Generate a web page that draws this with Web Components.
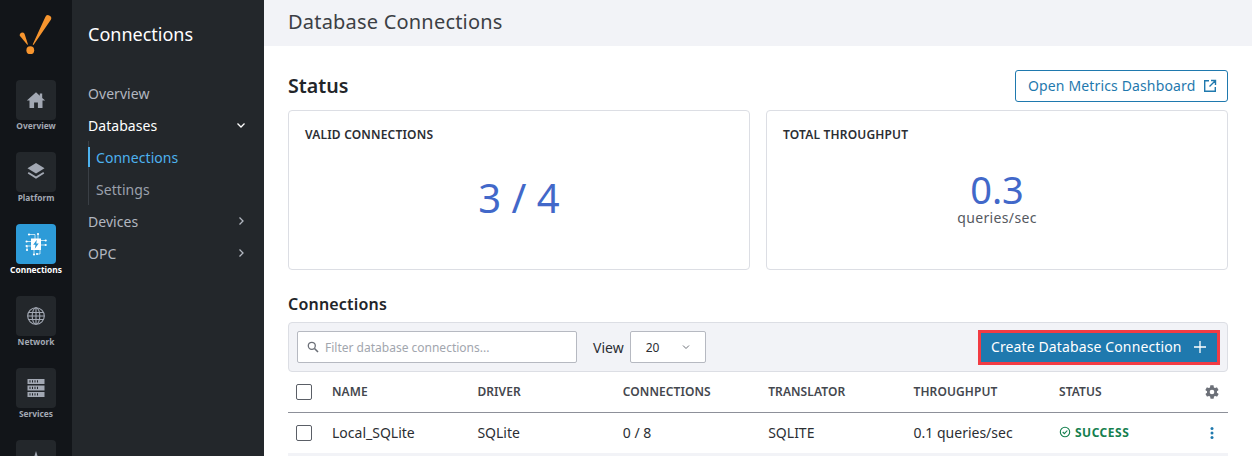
<!DOCTYPE html>
<html lang="en">
<head>
<meta charset="utf-8">
<title>Database Connections</title>
<style>
  html, body { margin: 0; height: 456px; overflow: hidden; background: #fff; }
  body { font-family: "Noto Sans", sans-serif; display: flex; }
</style>
</head>
<body>
<icon-rail>
  <rail-item label="Overview" icon="home"></rail-item>
  <rail-item label="Platform" icon="layers"></rail-item>
  <rail-item label="Connections" icon="chip" active></rail-item>
  <rail-item label="Network" icon="globe"></rail-item>
  <rail-item label="Services" icon="server"></rail-item>
  <rail-item icon="up"></rail-item>
</icon-rail>
<side-nav></side-nav>
<main-view></main-view>

<script>
const ICONS = {
  home: '<path fill="currentColor" d="M10 2.200 0.800 10.600h2.700V18h4.600v-5.400h3.800V18h4.600v-7.400h2.700l-3-2.700V3.400h-2.400v2.300z"/>',
  layers: '<path fill="currentColor" d="M10 1 1.500 6.300 10 11.600l8.500-5.300z"/><path fill="none" stroke="currentColor" stroke-width="1.800" d="M2.200 10.800 10 15.600l7.800-4.800"/>',
  chip: `<g stroke="#fff" stroke-width=".7" fill="none"><path d="M5 2.500h6V7M14 2v5M17 8.500h4.700M17 13h4.700M16 18v4H13M10 18v4.500M7 9.500H2.600M7 14H3v4"/></g><g fill="#fff"><circle cx="5" cy="2.500" r="1.100"/><circle cx="14" cy="2" r="1.100"/><circle cx="21.700" cy="8.500" r="1.100"/><circle cx="21.700" cy="13" r="1.100"/><circle cx="13" cy="22" r="1.100"/><circle cx="10" cy="22.500" r="1.100"/><circle cx="2.600" cy="9.500" r="1.100"/><circle cx="2.600" cy="14" r="1.100"/><circle cx="3" cy="18" r="1.100"/></g><rect x="7" y="6.500" width="10" height="11.500" fill="#fff"/><path fill="#2d9bd8" d="M12.800 7.800 9.200 12.800h2.300l-.7 3.900 3.900-5.300h-2.400z"/>`,
  globe: '<g fill="none" stroke="currentColor" stroke-width="1.100"><circle cx="10" cy="10" r="8.300"/><ellipse cx="10" cy="10" rx="3.800" ry="8.300"/><path d="M10 1.700v16.600M2.500 6.500h15M1.700 10h16.600M2.500 13.500h15"/></g>',
  server: '<g fill="currentColor"><path fill-rule="evenodd" d="M1.500 1h17v4.900h-17zM3.500 2.300v2.300h1V2.300zM6 2.300v2.300h1V2.300zM8.500 2.300v2.300h1V2.300zM11 2.300v2.300h1V2.300z"/><path fill-rule="evenodd" d="M1.500 7.500h17v4.900h-17zM3.500 8.800v2.300h1V8.800zM6 8.800v2.300h1V8.800zM8.500 8.800v2.300h1V8.800zM11 8.800v2.300h1V8.800z"/><path fill-rule="evenodd" d="M1.500 14h17v4.900h-17zM3.500 15.300v2.300h1v-2.300zM6 15.300v2.300h1v-2.300zM8.500 15.300v2.300h1v-2.300zM11 15.300v2.300h1v-2.300z"/></g>',
  up: '<path fill="currentColor" d="M10 1 7.500 9 2 13v2l6-2v3l-2 1.500V19l4-1 4 1v-1.500L12 16v-3l6 2v-2l-5.500-4z"/>'
};

class IconRail extends HTMLElement {
  constructor() {
    super();
    this.attachShadow({ mode: 'open' }).innerHTML = `
    <style>
      :host { display: flex; flex-direction: column; align-items: center; flex: none; width: 72px; height: 456px; overflow: hidden; background: #121519; }
      .logo { flex: none; height: 80px; width: 72px; }
      .logo svg { display: block; }
      .items { display: flex; flex-direction: column; gap: 32px; }
      ::slotted(*) { flex: none; }
    </style>
    <div class="logo">
      <svg width="72" height="70" viewBox="0 0 72 70">
        <path fill="#f7952e" d="M45.200 17.200a3.100 3.100 0 0 1 5.800 2.200L33.500 45l-.8-.4z"/>
        <path fill="#f7952e" d="M19.800 35.800a2.600 2.600 0 0 1 4.700-2.100L28 44.500l-.7.300z"/>
        <circle cx="30.300" cy="50.200" r="3.900" fill="#f7952e"/>
      </svg>
    </div>
    <div class="items"><slot></slot></div>`;
  }
}

class RailItem extends HTMLElement {
  constructor() {
    super();
    const icon = this.getAttribute('icon');
    const label = this.getAttribute('label');
    const size = icon === 'chip' ? 24 : 20;
    this.attachShadow({ mode: 'open' }).innerHTML = `
    <style>
      :host { display: block; width: 40px; height: 40px; position: relative; color: #a2a8b3; }
      :host([active]) { color: #fff; }
      .tile { width: 40px; height: 40px; border-radius: 4px; background: #23272b; display: flex; align-items: center; justify-content: center; }
      :host([active]) .tile { background: #2d9bd8; }
      .label { position: absolute; top: 39px; left: -16px; width: 72px; text-align: center; font: 700 8.4px/13px "Noto Sans", sans-serif; white-space: nowrap; }
      svg { display: block; }
    </style>
    <div class="tile"><svg width="${size}" height="${size}" viewBox="0 0 ${size} ${size}">${ICONS[icon]}</svg></div>
    ${label ? `<div class="label">${label}</div>` : ''}`;
  }
}

class NavLink extends HTMLElement {
  constructor() {
    super();
    const chevron = this.getAttribute('chevron');
    const d = chevron === 'down' ? 'M1.500 3.500 5 7l3.500-3.500' : 'M3.500 1.500 7 5l-3.500 3.500';
    this.attachShadow({ mode: 'open' }).innerHTML = `
    <style>
      :host { display: flex; align-items: center; justify-content: space-between; height: 32px; color: #b2b7c0; font-size: 14px; letter-spacing: .05px; }
      :host([open]) { color: #fff; }
      :host([sub]) { padding-left: 7px; color: #9ba1ab; position: relative; }
      :host([current]) { color: #4db2ef; }
      :host([current])::before { content: ""; position: absolute; left: -1px; top: 6px; bottom: 6px; width: 2px; background: #4db2ef; }
      svg { margin-right: 18px; display: block; }
    </style>
    <span><slot></slot></span>
    ${chevron ? `<svg width="10" height="10" viewBox="0 0 10 10"><path fill="none" stroke="${chevron === 'down' ? '#fff' : '#b2b7c0'}" stroke-width="1.300" d="${d}"/></svg>` : ''}`;
  }
}

class SideNav extends HTMLElement {
  constructor() {
    super();
    this.attachShadow({ mode: 'open' }).innerHTML = `
    <style>
      :host { display: block; flex: none; width: 176px; height: 456px; padding-left: 16px; background: #23272b; font-family: "Noto Sans", sans-serif; }
      h2 { margin: 0; height: 77px; padding-top: 20px; box-sizing: border-box; font-size: 18px; line-height: 28px; font-weight: 400; color: #fff; }
      .sub { border-left: 1px solid #3a3f45; }
    </style>
    <h2>Connections</h2>
    <nav-link>Overview</nav-link>
    <nav-link open chevron="down">Databases</nav-link>
    <div class="sub">
      <nav-link sub current>Connections</nav-link>
      <nav-link sub>Settings</nav-link>
    </div>
    <nav-link chevron="right">Devices</nav-link>
    <nav-link chevron="right">OPC</nav-link>`;
  }
}

class StatCard extends HTMLElement {
  constructor() {
    super();
    const unit = this.getAttribute('unit');
    this.attachShadow({ mode: 'open' }).innerHTML = `
    <style>
      :host { display: flex; flex-direction: column; flex: 1; height: 160px; box-sizing: border-box; padding: 16px; border: 1px solid #dcdee4; border-radius: 4px; background: #fff; }
      .title { font-size: 12px; line-height: 16px; font-weight: 600; letter-spacing: .18px; color: #2b2e33; }
      .body { flex: 1; display: flex; flex-direction: column; align-items: center; justify-content: center; }
      .value { font-size: ${unit ? '38px' : '40px'}; line-height: ${unit ? '40px' : '48px'}; color: #4268c9; }
      .unit { font-size: 14px; line-height: 18px; letter-spacing: .35px; color: #55595f; }
    </style>
    <div class="title">${this.getAttribute('title')}</div>
    <div class="body">
      <div class="value">${this.getAttribute('value')}</div>
      ${unit ? `<div class="unit">${unit}</div>` : ''}
    </div>`;
  }
}

class CheckBox extends HTMLElement {
  constructor() {
    super();
    this.attachShadow({ mode: 'open' }).innerHTML = `
    <style>
      :host { display: block; width: 16px; height: 16px; box-sizing: border-box; border: 1px solid #5a5e66; border-radius: 2px; background: #fff; }
    </style>`;
  }
}

class ConnectionsToolbar extends HTMLElement {
  constructor() {
    super();
    this.attachShadow({ mode: 'open' }).innerHTML = `
    <style>
      :host { display: flex; align-items: center; height: 50px; box-sizing: border-box; padding: 0 7px 0 8px; background: #f2f3f7; border: 1px solid #dcdee4; border-radius: 4px; }
      .search { display: flex; align-items: center; width: 280px; height: 32px; box-sizing: border-box; padding-left: 9px; gap: 6px; background: #fff; border: 1px solid #b6b9c1; border-radius: 2px; font-size: 12px; color: #a2a6ae; }
      .view { margin-left: 16px; font-size: 14px; color: #2b2e33; }
      .select { display: flex; align-items: center; justify-content: space-between; width: 76px; height: 32px; margin-left: 6px; box-sizing: border-box; padding: 0 15px; background: #fff; border: 1px solid #b6b9c1; border-radius: 2px; font-size: 12px; color: #2b2e33; }
      .create { margin-left: auto; display: flex; align-items: center; justify-content: space-between; width: 242px; height: 35px; box-sizing: border-box; padding: 0 10px; background: #1f79ae; border: 3px solid #f23b43; color: #fff; font-size: 14px; letter-spacing: .12px; }
      .create span { padding-bottom: 1px; }
      svg { display: block; flex: none; }
    </style>
    <div class="search">
      <svg width="12" height="12" viewBox="0 0 12 12"><circle cx="4.800" cy="4.800" r="3.500" fill="none" stroke="#6b6f77" stroke-width="1.300"/><path d="M7.500 7.500 11 11" stroke="#6b6f77" stroke-width="1.600"/></svg>
      <span>Filter database connections...</span>
    </div>
    <span class="view">View</span>
    <div class="select"><span>20</span>
      <svg width="8" height="8" viewBox="0 0 8 8"><path d="M1 2.500 4 5.500l3-3" fill="none" stroke="#6b6f77" stroke-width="1"/></svg>
    </div>
    <div class="create"><span>Create Database Connection</span>
      <svg width="14" height="14" viewBox="0 0 14 14"><path d="M7 1v12M1 7h12" stroke="#fff" stroke-width="1.300"/></svg>
    </div>`;
  }
}

class ConnectionsTable extends HTMLElement {
  constructor() {
    super();
    this.attachShadow({ mode: 'open' }).innerHTML = `
    <style>
      :host { display: block; font-size: 14px; color: #2b2e33; }
      .row { display: grid; grid-template-columns: 44px repeat(5, 145.4px) 1fr 24px; align-items: center; }
      .row > :first-child { margin-left: 8px; }
      .row > span { padding-bottom: 2px; }
      .head { height: 40px; border-bottom: 1px solid #8d9099; font-size: 12px; font-weight: 600; letter-spacing: .08px; color: #44474e; }
      .data { height: 40px; }
      .strip { height: 4px; background: #f2f3f7; }
      .row > .ok { display: flex; align-items: center; gap: 4px; font-size: 12px; font-weight: 700; letter-spacing: .5px; color: #15804f; }
      svg { display: block; }
    </style>
    <div class="row head">
      <check-box></check-box><span>NAME</span><span>DRIVER</span><span>CONNECTIONS</span><span>TRANSLATOR</span><span>THROUGHPUT</span><span>STATUS</span>
      <svg width="16" height="16" viewBox="0 0 24 24"><path fill="#6c7078" d="M19.400 13c0-.300.100-.700.100-1s0-.700-.100-1l2.100-1.600c.2-.1.200-.4.100-.6l-2-3.500c-.1-.2-.4-.3-.6-.2l-2.500 1c-.5-.4-1.100-.7-1.700-1l-.4-2.600c0-.3-.2-.5-.5-.5h-4c-.3 0-.5.200-.5.500l-.4 2.600c-.6.300-1.200.6-1.700 1l-2.500-1c-.2-.1-.5 0-.6.200l-2 3.500c-.1.200-.1.500.1.600L4.600 11c0 .3-.1.700-.1 1s0 .700.100 1l-2.100 1.600c-.2.100-.2.400-.1.600l2 3.500c.1.200.4.300.6.200l2.500-1c.5.400 1.100.7 1.700 1l.4 2.600c0 .3.200.5.500.5h4c.3 0 .5-.2.500-.5l.4-2.600c.6-.3 1.200-.6 1.700-1l2.500 1c.2.100.5 0 .6-.2l2-3.500c.1-.2.100-.5-.1-.6zM12 15.500a3.500 3.500 0 1 1 0-7 3.500 3.500 0 0 1 0 7z"/></svg>
    </div>
    <div class="row data">
      <check-box></check-box><span>Local_SQLite</span><span>SQLite</span><span>0 / 8</span><span>SQLITE</span><span>0.1 queries/sec</span>
      <span class="ok"><svg width="12" height="12" viewBox="0 0 12 12"><circle cx="6" cy="6" r="4.700" fill="none" stroke="#15804f" stroke-width="1.100"/><path d="M3.700 6 5.400 7.700 8.300 4.500" fill="none" stroke="#15804f" stroke-width="1.100"/></svg>SUCCESS</span>
      <svg width="16" height="16" viewBox="0 0 16 16"><g fill="#1f79ae"><circle cx="8" cy="3.500" r="1.500"/><circle cx="8" cy="8" r="1.500"/><circle cx="8" cy="12.500" r="1.500"/></g></svg>
    </div>
    <div class="strip"></div>`;
  }
}

class MainView extends HTMLElement {
  constructor() {
    super();
    this.attachShadow({ mode: 'open' }).innerHTML = `
    <style>
      :host { display: block; flex: 1; min-width: 0; height: 456px; overflow: hidden; background: #fff; font-family: "Noto Sans", sans-serif; }
      header { height: 46px; box-sizing: border-box; padding: 8px 24px 0; background: #f2f3f7; font-size: 20px; line-height: 28px; letter-spacing: .2px; color: #3c3f45; }
      .content { padding: 24px 24px 0; }
      .status-row { display: flex; align-items: center; justify-content: space-between; height: 32px; }
      h3 { margin: 0; font-size: 19.6px; line-height: 32px; font-weight: 600; color: #222529; }
      .open { display: flex; align-items: center; justify-content: space-between; width: 213px; height: 32px; box-sizing: border-box; padding: 0 10px 0 12px; border: 1px solid #1f79ae; border-radius: 3px; color: #1f79ae; font-size: 14px; letter-spacing: .14px; }
      .open span { padding-bottom: 2px; }
      .open svg { display: block; }
      .cards { display: flex; gap: 16px; margin-top: 8px; }
      h4 { margin: 21px 0 6px; font-size: 16px; line-height: 26px; font-weight: 600; letter-spacing: .2px; color: #222529; height: 25px; }
    </style>
    <header>Database Connections</header>
    <div class="content">
      <div class="status-row">
        <h3>Status</h3>
        <div class="open"><span>Open Metrics Dashboard</span>
          <svg width="14" height="14" viewBox="0 0 14 14"><path d="M6 1.700H1.700v10.600h10.600V8M8 1.500h4.500V6M12.500 1.500 6.500 7.500" fill="none" stroke="#1f79ae" stroke-width="1.400"/></svg>
        </div>
      </div>
      <div class="cards">
        <stat-card title="VALID CONNECTIONS" value="3 / 4"></stat-card>
        <stat-card title="TOTAL THROUGHPUT" value="0.3" unit="queries/sec"></stat-card>
      </div>
      <h4>Connections</h4>
      <connections-toolbar></connections-toolbar>
      <connections-table></connections-table>
    </div>`;
  }
}

customElements.define('check-box', CheckBox);
customElements.define('rail-item', RailItem);
customElements.define('icon-rail', IconRail);
customElements.define('nav-link', NavLink);
customElements.define('side-nav', SideNav);
customElements.define('stat-card', StatCard);
customElements.define('connections-toolbar', ConnectionsToolbar);
customElements.define('connections-table', ConnectionsTable);
customElements.define('main-view', MainView);
</script>
</body>
</html>
